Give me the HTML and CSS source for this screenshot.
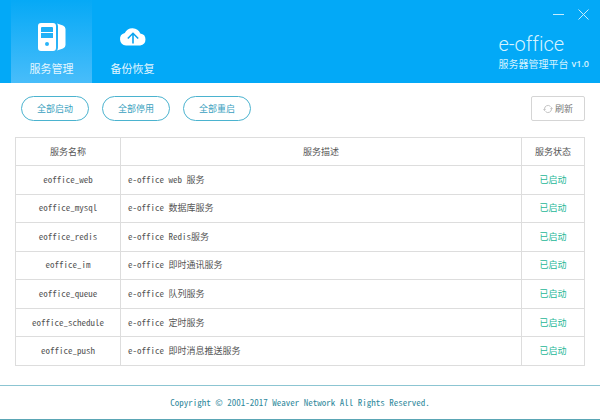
FILE: index.html
```html
<!DOCTYPE html>
<html lang="zh-CN">
<head>
    <meta charset="UTF-8">
    <meta name="viewport" content="width=device-width, initial-scale=1.0">
    <title>e-office 服务器管理平台</title>
    <link rel="stylesheet" href="styles.css">
</head>
<body>
    <header class="header">
        <nav class="tabs">
            <button class="tab active" type="button">
                <svg class="tab-icon" width="28" height="28" viewBox="0 0 28 28" aria-hidden="true">
                    <path fill="#fff" fill-rule="evenodd" d="M3 0h12a3 3 0 0 1 3 3v22a3 3 0 0 1-3 3H3a3 3 0 0 1-3-3V3a3 3 0 0 1 3-3zM4 4a1 1 0 0 0-1 1v4h12V5a1 1 0 0 0-1-1zM3 10v5h12v-5zM9 19a2 2 0 1 0 0 4 2 2 0 0 0 0-4z"/>
                    <path fill="#fff" d="M19 0.500l6 2q2.500 1 2.500 3.500v16q0 2.500-2.500 3.500l-6 2q1-1 1-3V3.500q0-2-1-3z"/>
                </svg>
                <span>服务管理</span>
            </button>
            <button class="tab" type="button">
                <svg class="tab-icon" width="28" height="28" viewBox="0 0 28 28" aria-hidden="true">
                    <path fill="#fff" d="M7 22.500a6.300 6.300 0 0 1-1.200-12.400A8.500 8.500 0 0 1 21.300 10.600 6 6 0 0 1 21.200 22.500z"/>
                    <path fill="none" stroke="#0ba4ef" stroke-width="1.600" d="M14 20.500v-10M8.800 15.500l5.200-5.200 5.200 5.200"/>
                </svg>
                <span>备份恢复</span>
            </button>
        </nav>
        <div class="header-right">
            <div class="window-buttons">
                <button class="window-btn" type="button" aria-label="最小化">
                    <svg width="11" height="11" viewBox="0 0 11 11"><path stroke="#c5ecfd" d="M0 5.500h11"/></svg>
                </button>
                <button class="window-btn" type="button" aria-label="关闭">
                    <svg width="11" height="11" viewBox="0 0 11 11"><path stroke="#c5ecfd" d="M.5.500l10 10M10.500.500l-10 10"/></svg>
                </button>
            </div>
            <div class="brand">
                <div class="logo">e-office</div>
                <div class="subtitle"><span>服务器管理平台</span><span class="version">v1.0</span></div>
            </div>
        </div>
    </header>

    <main class="content">
        <div class="toolbar">
            <button class="pill" type="button">全部启动</button>
            <button class="pill" type="button">全部停用</button>
            <button class="pill" type="button">全部重启</button>
            <button class="refresh" type="button">
                <svg width="10" height="10" viewBox="0 0 10 10" aria-hidden="true">
                    <path fill="none" stroke="#c4c4c4" d="M1.500 6.500V5A3.500 3.500 0 0 1 7.500 2.500M8.500 3.500V5A3.500 3.500 0 0 1 2.500 7.500"/>
                    <path fill="#c4c4c4" d="M0 5h3L1.500 7zM7 5h3L8.500 3z"/>
                </svg>
                <span>刷新</span>
            </button>
        </div>

        <table class="services">
            <thead>
                <tr><th class="col-name">服务名称</th><th>服务描述</th><th class="col-status">服务状态</th></tr>
            </thead>
            <tbody>
                <tr><td>eoffice_web</td><td class="desc">e-office web 服务</td><td class="status">已启动</td></tr>
                <tr><td>eoffice_mysql</td><td class="desc">e-office 数据库服务</td><td class="status">已启动</td></tr>
                <tr><td>eoffice_redis</td><td class="desc">e-office Redis服务</td><td class="status">已启动</td></tr>
                <tr><td>eoffice_im</td><td class="desc">e-office 即时通讯服务</td><td class="status">已启动</td></tr>
                <tr><td>eoffice_queue</td><td class="desc">e-office 队列服务</td><td class="status">已启动</td></tr>
                <tr><td>eoffice_schedule</td><td class="desc">e-office 定时服务</td><td class="status">已启动</td></tr>
                <tr><td>eoffice_push</td><td class="desc">e-office 即时消息推送服务</td><td class="status">已启动</td></tr>
            </tbody>
        </table>
    </main>

    <footer class="footer">Copyright © 2001-2017 Weaver Network All Rights Reserved.</footer>
</body>
</html>
```

FILE: styles.css
```css
* {
    box-sizing: border-box;
}

body {
    margin: 0;
    min-height: 100vh;
    display: flex;
    flex-direction: column;
    font-family: "Noto Sans CJK SC", sans-serif;
    font-size: 9px;
    line-height: 14px;
    color: #555;
    background-color: #fff;
}

button {
    font-family: inherit;
    font-size: inherit;
    line-height: inherit;
    padding: 0;
    cursor: pointer;
}

/* Header */
.header {
    display: flex;
    justify-content: space-between;
    padding-left: 11px;
    background-color: #03a9f7;
}

.tabs {
    display: flex;
}

.tab {
    width: 81px;
    height: 83px;
    padding-top: 14px;
    display: flex;
    flex-direction: column;
    align-items: center;
    justify-content: center;
    gap: 10px;
    border: none;
    background: none;
    color: #e4f6ff;
    font-size: 11px;
}

.tab.active {
    background: linear-gradient(#06a9f6, #48bdfa);
}

.header-right {
    display: flex;
    flex-direction: column;
    padding: 9px 11px 0 0;
}

.window-buttons {
    display: flex;
    justify-content: flex-end;
    gap: 14px;
}

.window-btn {
    width: 11px;
    height: 11px;
    border: none;
    background: none;
}

.window-btn svg {
    display: block;
}

.brand {
    padding-top: 12px;
    color: #d5f3ff;
}

.logo {
    font-family: Roboto, sans-serif;
    font-weight: 300;
    font-size: 20px;
    font-variant-ligatures: none;
    line-height: 24px;
}

.subtitle {
    display: flex;
    gap: 3px;
    font-size: 10px;
    line-height: 16px;
}

.version {
    font-family: "Open Sans", sans-serif;
    font-size: 9px;
    font-weight: 600;
}

/* Content */
.content {
    flex: 1;
    padding: 13px 15px 19px;
}

.toolbar {
    display: flex;
    gap: 13px;
    padding-left: 6px;
    margin-bottom: 16px;
}

.pill {
    width: 68px;
    height: 25px;
    border: 1px solid #4bb3cf;
    border-radius: 13px;
    background-color: #fff;
    color: #3a9fc0;
}

.refresh {
    width: 54px;
    height: 25px;
    margin-left: auto;
    display: flex;
    align-items: center;
    justify-content: center;
    gap: 2px;
    border: 1px solid #d5d5d5;
    border-radius: 2px;
    background-color: #fff;
    color: #777;
}

/* Services table */
.services {
    width: 100%;
    height: 229px;
    table-layout: fixed;
    border-collapse: collapse;
    text-align: center;
    font-feature-settings: "hwid";
    font-variant-ligatures: none;
}

.services th,
.services td {
    padding: 0;
    border: 1px solid #ddd;
    font-weight: 400;
}

.services th {
    height: 28px;
}

.col-name {
    width: 105px;
}

.col-status {
    width: 63px;
}

.services .desc {
    padding-left: 7px;
    text-align: left;
}

.services .status {
    color: #26b797;
}

/* Footer */
.footer {
    padding: 10px 0 9px;
    border-top: 1px solid #8cc5d2;
    border-bottom: 1px solid #5aa6b5;
    text-align: center;
    color: #30899c;
    font-feature-settings: "hwid";
    font-variant-ligatures: none;
}
```
